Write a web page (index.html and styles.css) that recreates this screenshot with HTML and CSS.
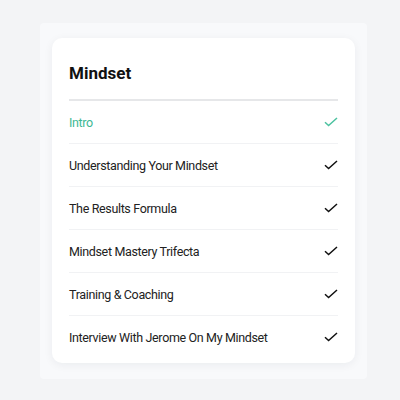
FILE: index.html
```html
<!DOCTYPE html>
<html>

<head>
    <title>Mindset</title>
    <link rel="stylesheet" href="styles.css">
</head>

<body>
    <div class="panel">
        <div class="card">
            <h2 class="card-title">Mindset</h2>
            <ul class="lessons">
                <li class="lesson active">
                    <span>Intro</span>
                    <svg class="check" viewBox="0 0 14 10"><path d="M1 5.2l3.6 3.4L13 1" /></svg>
                </li>
                <li class="lesson">
                    <span>Understanding Your Mindset</span>
                    <svg class="check" viewBox="0 0 14 10"><path d="M1 5.2l3.6 3.4L13 1" /></svg>
                </li>
                <li class="lesson">
                    <span>The Results Formula</span>
                    <svg class="check" viewBox="0 0 14 10"><path d="M1 5.2l3.6 3.4L13 1" /></svg>
                </li>
                <li class="lesson">
                    <span>Mindset Mastery Trifecta</span>
                    <svg class="check" viewBox="0 0 14 10"><path d="M1 5.2l3.6 3.4L13 1" /></svg>
                </li>
                <li class="lesson">
                    <span>Training &amp; Coaching</span>
                    <svg class="check" viewBox="0 0 14 10"><path d="M1 5.2l3.6 3.4L13 1" /></svg>
                </li>
                <li class="lesson">
                    <span>Interview With Jerome On My Mindset</span>
                    <svg class="check" viewBox="0 0 14 10"><path d="M1 5.2l3.6 3.4L13 1" /></svg>
                </li>
            </ul>
        </div>
    </div>
</body>

</html>
```

FILE: styles.css
```css
body {
    margin: 0;
    background: #f3f4f6;
    font-family: Roboto, "Liberation Sans", Arial, sans-serif;
    color: #222;
}

.panel {
    margin: 23px 33px 0 40px;
    padding: 15px 12px 16px 12px;
    background: #f8f9fb;
    border-radius: 4px;
}

.card {
    background: #fff;
    border-radius: 10px;
    padding: 24px 17px 5px 17px;
    box-shadow: 0 2px 10px rgba(20, 30, 50, 0.06);
}

.card-title {
    margin: 0;
    font-size: 17px;
    line-height: 22px;
    font-weight: 700;
    color: #111;
    padding-bottom: 15px;
    border-bottom: 2px solid #e6e7e9;
}

.lessons {
    list-style-type: none;
    margin: 0;
    padding: 0;
}

.lesson {
    display: flex;
    align-items: center;
    justify-content: space-between;
    height: 42px;
    font-size: 12.5px;
    letter-spacing: -0.35px;
    border-bottom: 1px solid #f1f2f4;
}

.lesson:last-child {
    border-bottom: none;
}

.lesson.active {
    color: #3db894;
}

.check {
    width: 14px;
    height: 10px;
    fill: none;
    stroke: #111;
    stroke-width: 1.5;
}

.lesson.active .check {
    stroke: #4cc2a0;
}
```
